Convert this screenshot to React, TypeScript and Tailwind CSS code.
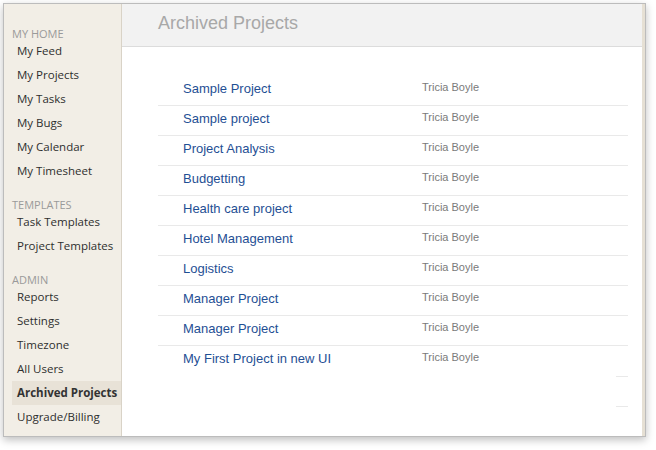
const sections = [
  {
    title: "My Home",
    items: ["My Feed", "My Projects", "My Tasks", "My Bugs", "My Calendar", "My Timesheet"],
  },
  { title: "Templates", items: ["Task Templates", "Project Templates"] },
  {
    title: "Admin",
    items: ["Reports", "Settings", "Timezone", "All Users", "Archived Projects", "Upgrade/Billing"],
  },
];

const projects = [
  "Sample Project",
  "Sample project",
  "Project Analysis",
  "Budgetting",
  "Health care project",
  "Hotel Management",
  "Logistics",
  "Manager Project",
  "Manager Project",
  "My First Project in new UI",
];

function Sidebar() {
  return (
    <div
      className="w-[118px] shrink-0 bg-[#f2eee6] border-r border-[#d9d3c7] pt-[23px]"
      style={{ fontFamily: '"Open Sans", "DejaVu Sans", sans-serif' }}
    >
      {sections.map((s, i) => (
        <div key={s.title} className={i > 0 ? "mt-[15px]" : ""}>
          <div className="h-[12px] flex items-center pl-[8px] text-[11px] leading-none uppercase text-[#9a9a9a]">
            {s.title}
          </div>
          {s.items.map((item) => {
            const active = item === "Archived Projects";
            return (
              <div
                key={item}
                className={
                  active
                    ? "h-[24px] flex items-center ml-[8px] pl-[5px] bg-[#e8e2d7] text-[11.5px] leading-none font-bold text-[#333]"
                    : "h-[24px] flex items-center pl-[13px] text-[11.5px] leading-none text-[#2e2e2e]"
                }
              >
                {item}
              </div>
            );
          })}
        </div>
      ))}
    </div>
  );
}

function ProjectRow({ name, last }: { name: string; last: boolean }) {
  return (
    <div className={last ? "h-[30px] flex pt-[4px] pl-[25px]" : "h-[30px] border-b border-[#e9e9e9] flex pt-[4px] pl-[25px]"}>
      <span className="w-[239px] h-[16px] flex items-center text-[13px] leading-none text-[#1f4f94]">
        {name}
      </span>
      <span className="h-[15px] flex items-center text-[11px] leading-none text-[#7a7a7a]">
        Tricia Boyle
      </span>
    </div>
  );
}

export default function App() {
  return (
    <div
      className="w-[656px] h-[450px] bg-white pl-[3px] pt-[3px]"
      style={{ fontFamily: '"Liberation Sans", Arial, sans-serif' }}
    >
      <div className="w-[643px] h-[434px] border border-[#bcbcbc] shadow-[0_3px_8px_rgba(0,0,0,0.25)] flex bg-white">
        <Sidebar />
        <div className="w-[520px] flex flex-col">
          <div className="h-[43px] bg-[#f2f2f2] border-b border-[#dcdcdc] flex items-center pl-[36px] pb-[4px]">
            <span className="text-[18px] leading-none text-[#a8a8a8]">Archived Projects</span>
          </div>
          <div className="pl-[36px] pr-[14px] pt-[29px]">
            {projects.map((p, i) => (
              <ProjectRow key={i} name={p} last={i === projects.length - 1} />
            ))}
            <div className="-mt-[30px] h-[31px] flex justify-end">
              <div className="w-[12px] border-b border-[#e9e9e9]" />
            </div>
            <div className="h-[30px] flex justify-end">
              <div className="w-[12px] border-b border-[#e9e9e9]" />
            </div>
          </div>
        </div>
        <div className="w-[3px] bg-[#e6e0d4]" />
      </div>
    </div>
  );
}
